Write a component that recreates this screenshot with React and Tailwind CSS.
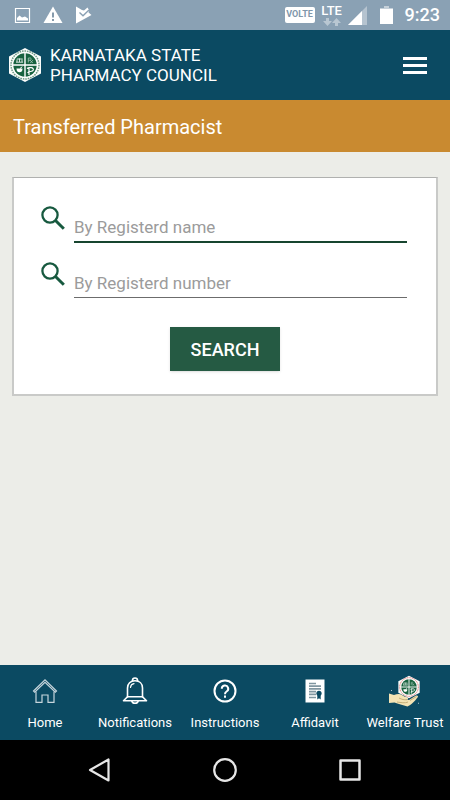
import { useState } from "react";

function CouncilLogo({ className, ring = "#6f9a86" }) {
  return (
    <svg viewBox="0 0 34 36" className={className} aria-hidden="true">
      <path d="M17 1 L33 9.500 V26.500 L17 35 L1 26.500 V9.500 Z" fill="#fbfdfb" />
      <circle cx="17" cy="18" r="14" fill="none" stroke={ring} strokeWidth="1.500" strokeDasharray="1.600 0.900" />
      <circle cx="17" cy="18" r="12.300" fill="#fff" />
      <circle cx="17" cy="18" r="11.700" fill="#17623f" />
      <path d="M17 6 V30 M5 18 H29" stroke="#fff" strokeWidth="1.400" />
      {/* building */}
      <path d="M8 15.200 H15 M9 15 V12.500 M11.500 15 V11.500 M14 15 V12.500 M8.800 12 H14.700" stroke="#e7f1ec" strokeWidth="0.900" fill="none" />
      {/* rx */}
      <path d="M20.300 15.500 V11 H22.500 A1.200 1.200 0 0 1 22.500 13.200 H20.300 M22 13.200 L24.800 16 M24.800 13.200 L22.300 16" stroke="#a9cbbb" strokeWidth="0.800" fill="none" />
      {/* mortar */}
      <path d="M8.500 21.500 H14.500 C14.500 24.300 13.300 25.300 11.500 25.300 C9.700 25.300 8.500 24.300 8.500 21.500 Z" fill="#fff" />
      <path d="M12 21.500 L14.300 19.700" stroke="#fff" strokeWidth="1" />
      {/* serpent and staff */}
      <path d="M21 28 V20.500 M19 21.500 C21 19.800 26 20.500 25.300 23 C24.500 25 21 24 19.500 25.800" stroke="#fff" strokeWidth="1.200" fill="none" />
    </svg>
  );
}

function HomeIcon() {
  return (
    <svg viewBox="0 0 26 26" className="h-[26px] w-[26px]" fill="none" stroke="#c6d5dc" strokeWidth="1.200" aria-hidden="true">
      <path d="M1.500 13 L13 1.800 L24.500 13 L23.300 14.200 L13 4.300 L2.700 14.200 Z" />
      <path d="M4 13.500 V24.400 H10 V17 H16 V24.400 H22 V13.500" />
    </svg>
  );
}

function BellIcon() {
  return (
    <svg viewBox="0 0 26 28" className="h-7 w-[26px]" fill="none" stroke="#fff" strokeWidth="1.600" strokeLinejoin="round" strokeLinecap="round" aria-hidden="true">
      <path d="M10.500 3.500 A2.500 2.500 0 0 1 15.500 3.500" />
      <path d="M5.500 20 V11 C5.500 6.500 8.500 3.800 13 3.800 C17.500 3.800 20.500 6.500 20.500 11 V20" />
      <path d="M5.500 19.800 H20.500 L24.500 23.800 H1.500 Z" />
      <path d="M8.500 10.500 C8.700 8.200 10 7 12 6.700" strokeWidth="1.200" />
      <path d="M9.800 24 A3.300 3 0 0 0 16.200 24" />
    </svg>
  );
}

function HelpIcon() {
  return (
    <svg viewBox="0 0 24 24" className="h-6 w-6" fill="none" stroke="#fff" strokeWidth="2" aria-hidden="true">
      <circle cx="12" cy="12" r="10.500" />
      <path d="M8.800 9.800 A3.200 3.200 0 1 1 13.600 12.500 C12.400 13.300 12 13.800 12 15.200" />
      <path d="M12 16.500 V18.700" />
    </svg>
  );
}

function AffidavitIcon() {
  return (
    <svg viewBox="0 0 20 24" className="h-6 w-5" aria-hidden="true">
      <path d="M0.500 0.500 H19.500 V23.500 H0.500 Z" fill="#fff" />
      <path d="M4 4.500 H11 M4 7.200 H16 M4 9.900 H16 M4 12.600 H11 M4 15.300 H11 M4 18.500 H11" stroke="#8197a1" strokeWidth="1.700" />
      <circle cx="14" cy="14.300" r="2.600" fill="#0b4a62" />
      <path d="M12.300 15.500 V20.500 L14 19.300 L15.700 20.500 V15.500 Z" fill="#0b4a62" />
    </svg>
  );
}

function WelfareIcon() {
  return (
    <span className="relative block h-8 w-8">
      <svg viewBox="0 0 32 32" className="h-8 w-8" aria-hidden="true">
        <path d="M0 18.500 L5 20 C8 19 11 18.500 13 20 C15 21.500 17 22 18.500 22.500 C20 23.500 19 25 17 24.500 L20 25 L27 20.500 C29 20 29.500 21.500 28.500 22.500 C26 26 22 30 18.500 31.500 C14 30.500 9 28.500 5.500 27.500 L0 28 Z" fill="#f3e3b4" />
        <path d="M10 23 C13 24.500 15 25 18 24.700 M8 27 C12 27.500 16 28.500 19 27 M21 25.500 L27.500 21.500" fill="none" stroke="#b9a26b" strokeWidth="0.800" />
        <path d="M2 16 L3 15 M29 28.500 L30 28" stroke="#d5dfe3" strokeWidth="0.800" />
      </svg>
      <CouncilLogo ring="#e0726f" className="absolute top-0 right-0 h-6 w-6" />
    </span>
  );
}

function SearchIcon() {
  return (
    <svg viewBox="0 0 24 24" className="mt-px h-6 w-6 shrink-0" fill="none" stroke="#17593f" aria-hidden="true">
      <circle cx="9" cy="9" r="7.600" strokeWidth="2.300" />
      <path d="M14.500 14.500 L22.800 22.800" strokeWidth="3" />
    </svg>
  );
}

function StatusBar() {
  return (
    <div className="flex h-[30px] items-center justify-between bg-[#8aa1b4] pr-[10px] pl-[14px] text-white">
      <div className="flex items-center gap-3">
        <svg viewBox="0 0 17 17" className="h-[17px] w-[17px]" aria-hidden="true">
          <path d="M1.500 1.500 H15.500 V15.500 H1.500 Z" fill="none" stroke="#fff" strokeWidth="1.200" />
          <path d="M3 13.500 V11 L5.500 8.500 L8 10.500 L11 9.500 L14 11.500 V13.500 Z" fill="#fff" />
        </svg>
        <svg viewBox="0 0 20 18" className="h-[18px] w-5" aria-hidden="true">
          <path d="M10 0.500 L19.500 17 H0.500 Z" fill="#fff" />
          <path d="M10 6.500 V11.500 M10 13 V15" stroke="#7890a4" strokeWidth="1.800" />
        </svg>
        <svg viewBox="0 0 17 18" className="h-[18px] w-[17px]" aria-hidden="true">
          <path d="M1 0.500 L7 4 L9 4.500 L12.500 1.500 L14 4 L13.500 6.500 L16.500 9 L1 17.500 Z" fill="#fff" />
          <path d="M4.500 6.500 L8 9.800 L14 4" fill="none" stroke="#8aa1b4" strokeWidth="1.400" />
        </svg>
      </div>
      <div className="flex items-center">
        <span className="flex h-4 w-[30px] items-center justify-center rounded-xs bg-white text-[9px] font-bold text-[#7f97ab]">
          VOLTE
        </span>
        <span className="ml-[5px] flex w-6 flex-col items-center">
          <span className="text-[13px] leading-[14px] font-medium">LTE</span>
          <svg viewBox="0 0 18 8" className="h-2 w-[18px]" fill="#b9c7d2" aria-hidden="true">
            <path d="M3 0 H6 V3 H9 L4.500 8 L0 3 H3 Z M12 8 H15 V5 H18 L13.500 0 L9 5 H12 Z" />
          </svg>
        </span>
        <svg viewBox="0 0 19 19" className="ml-1 h-[19px] w-[19px]" aria-hidden="true">
          <path d="M19 0 V19 H0 Z" fill="#b5c3cf" />
          <path d="M14 5 V19 H0 Z" fill="#fff" />
        </svg>
        <svg viewBox="0 0 13 18" className="ml-[13px] h-[18px] w-[13px]" aria-hidden="true">
          <path d="M4 0 H9 V2 H13 V5 H0 V2 H4 Z" fill="#c5d0d9" />
          <path d="M0 3 H13 V18 H0 Z" fill="#fff" />
        </svg>
        <span className="ml-3 text-lg leading-5 font-medium">9:23</span>
      </div>
    </div>
  );
}

const tabs = [
  { label: "Home", icon: <HomeIcon /> },
  { label: "Notifications", icon: <BellIcon /> },
  { label: "Instructions", icon: <HelpIcon /> },
  { label: "Affidavit", icon: <AffidavitIcon /> },
  { label: "Welfare Trust", icon: <WelfareIcon /> },
];

export default function App() {
  const [name, setName] = useState("");
  const [number, setNumber] = useState("");

  return (
    <div className="flex min-h-screen flex-col bg-[#ecede8] font-[Roboto,sans-serif]">
      <StatusBar />

      <header className="flex h-[70px] items-center bg-[#0b4a62] pr-[23px] pl-2 text-white">
        <CouncilLogo className="h-9 w-[34px]" />
        <h1 className="ml-2 text-[17px] leading-5">
          KARNATAKA STATE
          <br />
          PHARMACY COUNCIL
        </h1>
        <button type="button" aria-label="Menu" className="ml-auto flex w-6 flex-col gap-1">
          <span className="h-[3px] bg-white" />
          <span className="h-[3px] bg-white" />
          <span className="h-[3px] bg-white" />
        </button>
      </header>

      <div className="flex h-[52px] items-center bg-[#c98a30] px-[13px] pt-0.5">
        <h2 className="text-xl text-white">Transferred Pharmacist</h2>
      </div>

      <main className="flex-1 px-3 pt-[25px]">
        <form
          onSubmit={(e) => e.preventDefault()}
          className="flex flex-col items-center border-2 border-t border-[#c9cac8] border-t-[#b0b1af] bg-white px-[27px] pt-[27px] pb-[23px]"
        >
          <div className="flex w-full gap-[9px] pr-0.5">
            <SearchIcon />
            <input
              type="text"
              aria-label="By Registerd name"
              placeholder="By Registerd name"
              value={name}
              onChange={(e) => setName(e.target.value)}
              className="h-[38px] min-w-0 flex-1 border-b-2 border-[#17452f] pt-2 text-[17px] outline-none placeholder:text-[#9b9b9b]"
            />
          </div>
          <div className="mt-[18px] flex w-full gap-[9px] pr-0.5">
            <SearchIcon />
            <input
              type="text"
              aria-label="By Registerd number"
              placeholder="By Registerd number"
              value={number}
              onChange={(e) => setNumber(e.target.value)}
              className="h-[37px] min-w-0 flex-1 border-b border-[#6c6c6c] pt-2 text-[17px] outline-none placeholder:text-[#9b9b9b]"
            />
          </div>
          <button
            type="submit"
            className="mt-[29px] h-11 w-[110px] bg-[#255a43] pt-0.5 text-lg font-medium text-white shadow-sm"
          >
            SEARCH
          </button>
        </form>
      </main>

      <nav className="grid h-[75px] grid-cols-5 bg-[#0b4a62] text-white">
        {tabs.map((tab) => (
          <a key={tab.label} href="#" className="flex flex-col items-center pt-[10px]">
            <span className="flex h-8 items-center">{tab.icon}</span>
            <span className="mt-1.5 text-[13px] leading-5 whitespace-nowrap">{tab.label}</span>
          </a>
        ))}
      </nav>

      <div className="flex h-[60px] items-center justify-center gap-[101px] bg-black">
        <button type="button" aria-label="Back">
          <svg viewBox="0 0 24 24" className="h-6 w-6" fill="none" stroke="#e6e6e6" strokeWidth="2.200" strokeLinejoin="round">
            <path d="M20.500 1.500 V22.500 L2 12 Z" />
          </svg>
        </button>
        <button type="button" aria-label="Home screen">
          <svg viewBox="0 0 24 24" className="h-6 w-6" fill="none" stroke="#e6e6e6" strokeWidth="2.200">
            <circle cx="12" cy="12" r="10.800" />
          </svg>
        </button>
        <button type="button" aria-label="Recent apps">
          <svg viewBox="0 0 24 24" className="h-6 w-6" fill="none" stroke="#e6e6e6" strokeWidth="2.500" strokeLinejoin="round">
            <path d="M2.500 2.500 H21.500 V21.500 H2.500 Z" />
          </svg>
        </button>
      </div>
    </div>
  );
}
